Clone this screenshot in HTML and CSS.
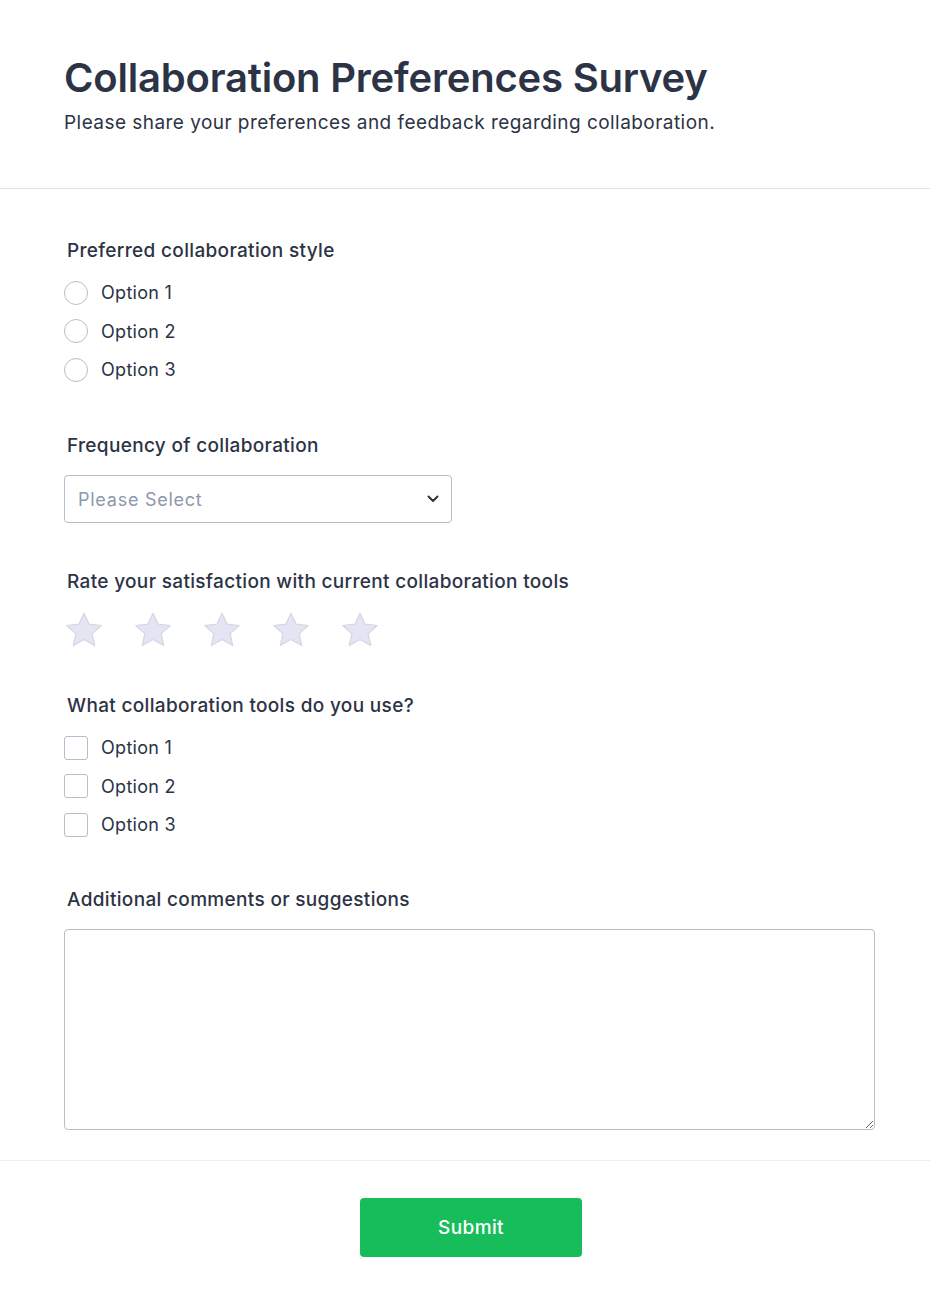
FILE: index.html
```html
<!DOCTYPE html>
<html lang="en">
<head>
<meta charset="utf-8">
<title>Collaboration Preferences Survey</title>
<link rel="stylesheet" href="styles.css">
</head>
<body>
<form class="form">
  <header class="header">
    <h1 class="title">Collaboration Preferences Survey</h1>
    <p class="subtitle">Please share your preferences and feedback regarding collaboration.</p>
  </header>

  <div class="body">
    <section class="field field-radio">
      <div class="label">Preferred collaboration style</div>
      <div class="options">
        <label class="option"><span class="radio"></span><span>Option 1</span></label>
        <label class="option"><span class="radio"></span><span>Option 2</span></label>
        <label class="option"><span class="radio"></span><span>Option 3</span></label>
      </div>
    </section>

    <section class="field field-select">
      <div class="label">Frequency of collaboration</div>
      <div class="select">
        <span class="placeholder">Please Select</span>
        <svg class="chevron" width="12" height="8" viewBox="0 0 12 8"><path d="M1.5 1.5 L6 6 L10.5 1.5" fill="none" stroke="#2c3345" stroke-width="2" stroke-linecap="round" stroke-linejoin="round"/></svg>
      </div>
    </section>

    <section class="field field-rating">
      <div class="label">Rate your satisfaction with current collaboration tools</div>
      <div class="stars">
        <svg class="star" viewBox="0 0 40 38"><path d="M20 2.2 L25.1 13.2 L37.2 14.5 L28.2 22.6 L30.7 34.5 L20 28.5 L9.3 34.5 L11.8 22.6 L2.8 14.5 L14.9 13.2 Z" /></svg>
        <svg class="star" viewBox="0 0 40 38"><path d="M20 2.2 L25.1 13.2 L37.2 14.5 L28.2 22.6 L30.7 34.5 L20 28.5 L9.3 34.5 L11.8 22.6 L2.8 14.5 L14.9 13.2 Z" /></svg>
        <svg class="star" viewBox="0 0 40 38"><path d="M20 2.2 L25.1 13.2 L37.2 14.5 L28.2 22.6 L30.7 34.5 L20 28.5 L9.3 34.5 L11.8 22.6 L2.8 14.5 L14.9 13.2 Z" /></svg>
        <svg class="star" viewBox="0 0 40 38"><path d="M20 2.2 L25.1 13.2 L37.2 14.5 L28.2 22.6 L30.7 34.5 L20 28.5 L9.3 34.5 L11.8 22.6 L2.8 14.5 L14.9 13.2 Z" /></svg>
        <svg class="star" viewBox="0 0 40 38"><path d="M20 2.2 L25.1 13.2 L37.2 14.5 L28.2 22.6 L30.7 34.5 L20 28.5 L9.3 34.5 L11.8 22.6 L2.8 14.5 L14.9 13.2 Z" /></svg>
      </div>
    </section>

    <section class="field field-check">
      <div class="label">What collaboration tools do you use?</div>
      <div class="options">
        <label class="option"><span class="checkbox"></span><span>Option 1</span></label>
        <label class="option"><span class="checkbox"></span><span>Option 2</span></label>
        <label class="option"><span class="checkbox"></span><span>Option 3</span></label>
      </div>
    </section>

    <section class="field field-text">
      <div class="label">Additional comments or suggestions</div>
      <textarea class="textarea"></textarea>
    </section>
  </div>

  <footer class="footer">
    <button type="button" class="submit">Submit</button>
  </footer>
</form>
</body>
</html>
```

FILE: styles.css
```css
* { box-sizing: border-box; }

html, body {
  margin: 0;
  padding: 0;
  background: #ffffff;
}

body {
  font-family: Inter, "Noto Sans", sans-serif;
  color: #2c3345;
}

.header {
  padding: 54px 64px 52px;
  border-bottom: 1px solid #dcdff0;
}

.title {
  margin: 0;
  font-size: 40px;
  line-height: 48px;
  font-weight: 600;
  letter-spacing: -0.2px;
}

.subtitle {
  margin: 7px 0 0;
  font-size: 19px;
  line-height: 27px;
  font-weight: 400;
  letter-spacing: 0.45px;
}

.body {
  padding: 48px 55px 30px 64px;
  border-bottom: 1px solid #ebecf5;
}

.field {
  display: flex;
  flex-direction: column;
}

.label {
  font-size: 19px;
  line-height: 27px;
  font-weight: 500;
  padding-left: 3px;
  letter-spacing: 0.33px;
}

.field-radio { margin-bottom: 49px; }
.field-select { margin-bottom: 45px; }
.field-rating { margin-bottom: 43px; }
.field-check { margin-bottom: 48px; }

.options {
  display: flex;
  flex-direction: column;
  gap: 11.5px;
  margin-top: 15px;
}

.option {
  display: flex;
  align-items: center;
  gap: 13px;
  font-size: 18px;
  line-height: 27px;
  letter-spacing: 0.3px;
}

.radio {
  width: 24px;
  height: 24px;
  border: 1px solid #b8bdc9;
  border-radius: 50%;
  background: #fff;
  flex: none;
}

.checkbox {
  width: 24px;
  height: 24px;
  border: 1px solid #b8bdc9;
  border-radius: 3px;
  background: #fff;
  flex: none;
}

.select {
  margin-top: 16px;
  width: 388px;
  height: 48px;
  border: 1px solid #b8bdc9;
  border-radius: 4px;
  display: flex;
  align-items: center;
  justify-content: space-between;
  padding: 0 12px 0 13px;
}

.placeholder {
  font-size: 18px;
  color: #8d98ae;
  letter-spacing: 0.75px;
}

.stars {
  display: flex;
  gap: 29px;
  margin-top: 16px;
}

.star {
  width: 40px;
  height: 38px;
  fill: #e3e5f2;
  stroke: #d3d6e4;
  stroke-width: 1.2;
  stroke-linejoin: round;
}

.textarea {
  margin-top: 16px;
  display: block;
  width: 811px;
  height: 201px;
  border: 1px solid #b8bdc9;
  border-radius: 4px;
  resize: vertical;
  font-family: inherit;
  font-size: 16px;
  padding: 10px 12px;
}

.footer {
  display: flex;
  justify-content: center;
  padding: 37px 55px 50px 64px;
}

.submit {
  width: 222px;
  height: 59px;
  margin-left: 3px;
  border: none;
  border-radius: 4px;
  background: #18bd5b;
  color: #ffffff;
  font-family: inherit;
  font-size: 19px;
  font-weight: 500;
  letter-spacing: 0.4px;
}
```
